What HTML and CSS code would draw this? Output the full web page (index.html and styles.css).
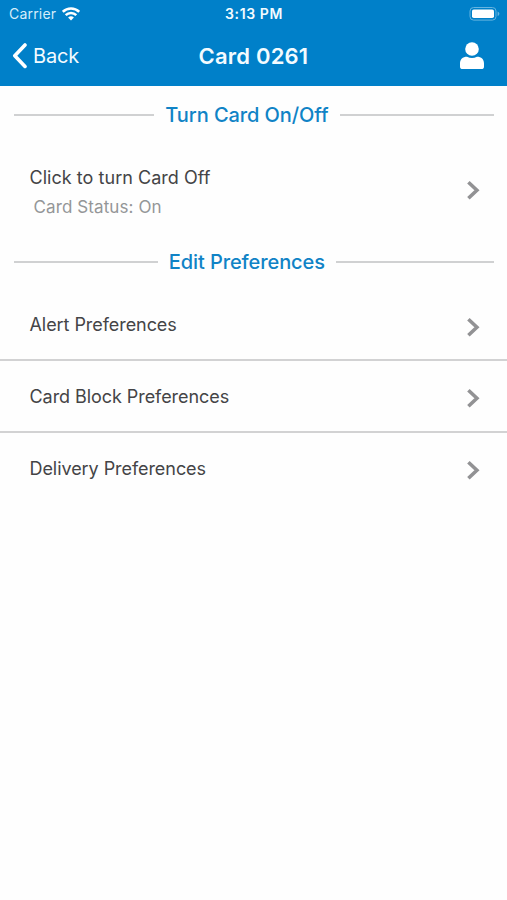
FILE: index.html
```html
<!DOCTYPE html>
<html lang="en">

<head>
    <meta charset="utf-8">
    <title>Card 0261</title>
    <link rel="stylesheet" href="styles.css">
</head>

<body>
    <header class="header">
        <div class="status">
            <div class="carrier">
                <span class="carrier-name">Carrier</span>
                <svg class="wifi" width="18" height="14" viewBox="0 0 18 14">
                    <path d="M.8 4.800a11.700 11.700 0 0 1 16.400 0M3.700 8.100a7.500 7.500 0 0 1 10.600 0" />
                    <path class="dot" d="M6.100 10.600a4.200 4.200 0 0 1 5.800 0L9 13.600z" />
                </svg>
            </div>
            <span class="time">3:13 PM</span>
            <svg class="battery" width="32" height="14" viewBox="0 0 32 14">
                <rect class="shell" x="1" y=".5" width="26" height="12.600" rx="3.600" />
                <rect class="charge" x="3" y="2.500" width="22" height="8.600" rx="1.800" />
                <path class="tip" d="M28.600 4.500q1.800.7 1.800 2.300t-1.800 2.300z" />
            </svg>
        </div>
        <nav class="nav">
            <a class="back">
                <svg class="back-icon" width="16" height="26" viewBox="0 0 16 26">
                    <path d="M14 2 3.800 12.700 14 23.400" />
                </svg>
                <span class="back-text">Back</span>
            </a>
            <h1 class="title">Card 0261</h1>
            <svg class="user" width="24" height="28" viewBox="0 0 24 28">
                <circle cx="12" cy="7" r="6.800" />
                <path d="M7 14.800q5 2.400 10 0c4.400 0 7 2.700 7 6.800v2.800q0 2.700-2.700 2.700H2.700Q0 27.100 0 24.400v-2.800c0-4.100 2.600-6.800 7-6.800z" />
            </svg>
        </nav>
    </header>

    <main>
        <h2 class="divider">Turn Card On/Off</h2>
        <div class="item card-item">
            <div class="label">
                <p class="click">Click to turn Card Off</p>
                <p class="card-status">Card Status: On</p>
            </div>
            <svg class="arrow" width="14" height="20" viewBox="0 0 14 20"><path d="M2.400 2.200 10.900 10.200l-8.500 8" /></svg>
        </div>

        <h2 class="divider">Edit Preferences</h2>
        <ul class="list">
            <li class="item">
                <span class="label">Alert Preferences</span>
                <svg class="arrow" width="14" height="20" viewBox="0 0 14 20"><path d="M2.400 2.200 10.900 10.200l-8.500 8" /></svg>
            </li>
            <li class="item">
                <span class="label">Card Block Preferences</span>
                <svg class="arrow" width="14" height="20" viewBox="0 0 14 20"><path d="M2.400 2.200 10.900 10.200l-8.500 8" /></svg>
            </li>
            <li class="item">
                <span class="label">Delivery Preferences</span>
                <svg class="arrow" width="14" height="20" viewBox="0 0 14 20"><path d="M2.400 2.200 10.900 10.200l-8.500 8" /></svg>
            </li>
        </ul>
    </main>
</body>

</html>
```

FILE: styles.css
```css
* {
    box-sizing: border-box;
    margin: 0;
    padding: 0;
}

body {
    background-color: #fefefe;
    color: #444446;
    font-family: Inter, "Liberation Sans", sans-serif;
}

svg {
    display: block;
    fill: none;
}

/* blue bar on top */
.header {
    height: 86px;
    background-color: #0080c9;
    color: #f3fbff;
}

.status,
.nav {
    display: grid;
    grid-template-columns: 1fr auto 1fr;
    align-items: center;
}

.status {
    height: 27px;
    padding: 0 6px 0 9px;
}

.carrier {
    display: flex;
    align-items: center;
    gap: 6px;
    font-size: 14px;
    letter-spacing: .2px;
    color: #d5edfa;
}

.wifi {
    stroke: #fff;
    stroke-width: 2.5;
}

.wifi .dot {
    fill: #fff;
    stroke: none;
}

.time {
    padding-right: 2px;
    font-size: 14px;
    font-weight: 600;
    letter-spacing: .6px;
}

.battery {
    justify-self: end;
}

.shell {
    stroke: #66b4e0;
    stroke-width: 1;
}

.charge {
    fill: #fff;
}

.tip {
    fill: #66b4e0;
}

.nav {
    height: 58px;
    padding: 0 11px;
}

.back {
    display: flex;
    align-items: center;
    gap: 6px;
    font-size: 20px;
    letter-spacing: -.2px;
}

.back-icon {
    stroke: #fff;
    stroke-width: 3.6;
    stroke-linecap: round;
    stroke-linejoin: round;
}

.title {
    font-size: 22px;
    font-weight: 600;
    letter-spacing: .2px;
}

.user {
    justify-self: end;
    margin-right: 12px;
    fill: #fff;
}

/* heading with a line on both sides */
.divider {
    display: flex;
    align-items: center;
    gap: 11px;
    height: 57px;
    padding: 0 13px 0 14px;
    color: #1083c6;
    font-size: 20px;
    font-weight: 500;
    letter-spacing: -.08px;
    white-space: nowrap;
}

.divider::before,
.divider::after {
    content: "";
    flex: 10 1 0;
    height: 2px;
    background-color: #d0d1d2;
}

.divider::after {
    flex-grow: 11;
}

.list {
    list-style: none;
}

.item {
    display: flex;
    justify-content: space-between;
    align-items: center;
    height: 72px;
    padding: 4px 27px 0 29.5px;
    border-bottom: 2px solid #d2d2d3;
    font-size: 18px;
    letter-spacing: -.06px;
}

.item:first-child {
    height: 71px;
}

.item:last-child {
    height: 70px;
    border-bottom: none;
}

.label {
    line-height: 24px;
    padding-bottom: 3px;
}

.card-item {
    height: 90px;
    border-bottom: none;
    letter-spacing: .04px;
}

.card-item .label {
    padding: 4px 0 0;
}

.card-status {
    margin-top: 5px;
    padding-left: 4px;
    font-size: 17px;
    letter-spacing: .1px;
    color: #949698;
}

.arrow {
    stroke: #929294;
    stroke-width: 3.6;
}
```
